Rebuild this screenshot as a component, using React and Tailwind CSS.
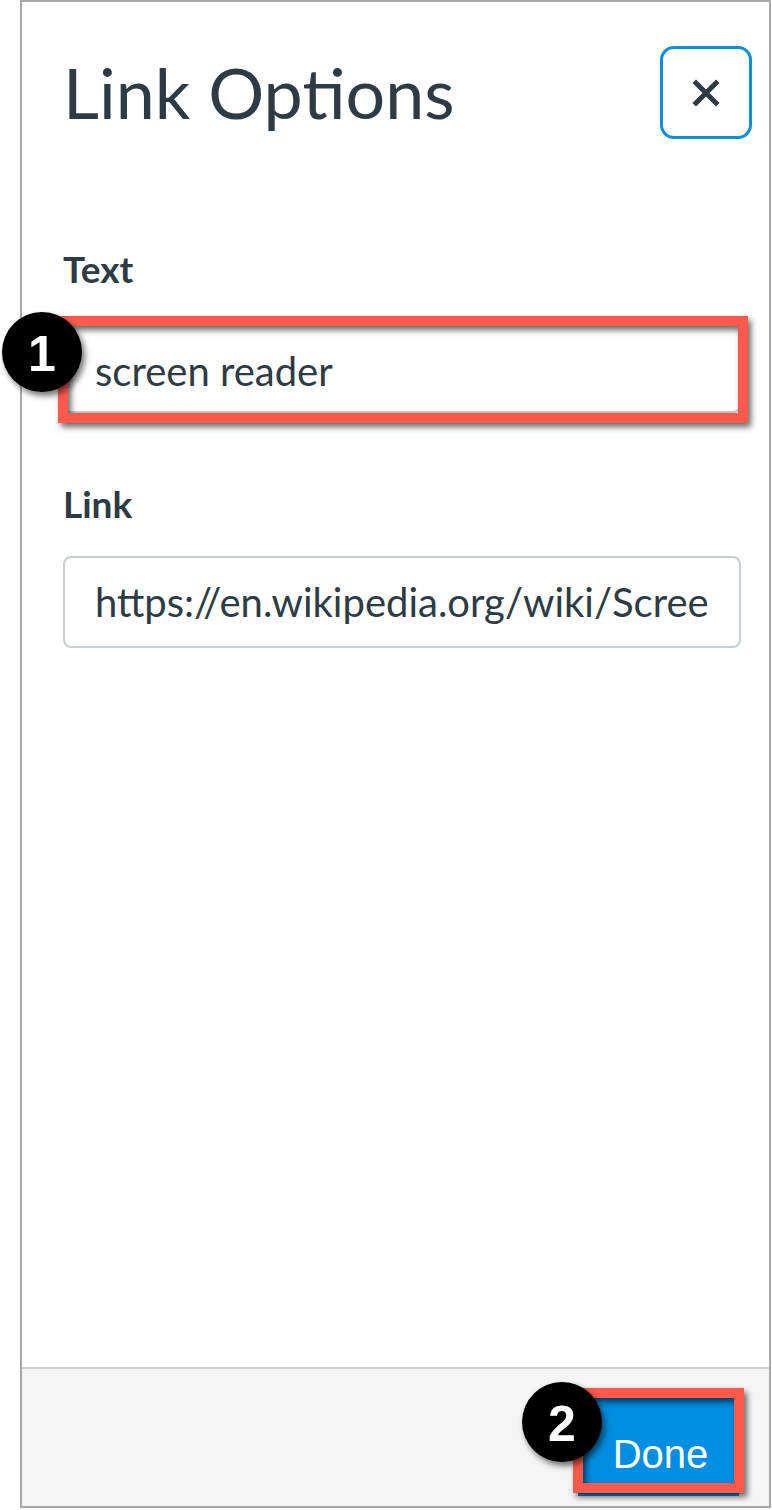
import React from "react";

const INK = "text-[#2d3b45]";

const CloseIcon = () => (
  <svg width="30" height="30" viewBox="0 0 30 30" fill="none">
    <path d="M5 5 L25 25 M25 5 L5 25" stroke="#2d3b45" strokeWidth="5" strokeLinecap="square" />
  </svg>
);

const Badge = ({ n, className }) => (
  <div
    className={`absolute flex h-[80px] w-[80px] items-center justify-center rounded-full bg-black pt-[4px] text-[50px] font-bold leading-none text-white shadow-[3px_4px_6px_rgba(0,0,0,0.55)] ${className}`}
    style={{ fontFamily: '"Liberation Sans", Arial, sans-serif' }}
  >
    {n}
  </div>
);

export default function App() {
  return (
    <div className="relative h-[1510px] w-[772px] bg-white pb-[2px] pl-[20px] pr-[1px]" style={{ fontFamily: "Lato, sans-serif" }}>
      <div className="flex h-full flex-col border-2 border-[#a9a9a9]">
        <div className="flex-1 pl-[41px] pr-[28px]">
          <div className="flex items-start justify-between pt-[44px]">
            <h1 className={`mt-[11px] text-[70px] font-normal leading-none ${INK}`}>Link Options</h1>
            <button className="mr-[-11px] flex h-[93px] w-[92px] items-center justify-center rounded-[14px] border-[3px] border-[#0a8fe0] bg-white">
              <CloseIcon />
            </button>
          </div>

          <div className={`mt-[111px] text-[37px] font-bold leading-none ${INK}`}>Text</div>
          <div className={`mt-[34px] flex h-[92px] items-center rounded-[8px] border-2 border-[#c7cdd1] pl-[30px] pt-[8px] text-[40px] ${INK}`}>
            screen reader
          </div>

          <div className={`mt-[72px] text-[37px] font-bold leading-none ${INK}`}>Link</div>
          <div className={`mt-[34px] flex h-[92px] items-center overflow-hidden whitespace-nowrap rounded-[8px] border-2 border-[#c7cdd1] pl-[30px] text-[40px] ${INK}`}>
            https://en.wikipedia.org/wiki/Scree
          </div>
        </div>

        <div className="flex h-[139px] justify-end border-t-2 border-[#c7cdd1] bg-[#f5f5f5] pr-[30px] pt-[24px]">
          <button
            className="h-[103px] w-[161px] bg-[#008ee2] pl-[4px] pt-[18px] text-center text-[40px] leading-none text-white"
            style={{ fontFamily: '"Liberation Sans", Arial, sans-serif' }}
          >
            Done
          </button>
        </div>
      </div>

      {/* annotations */}
      <div className="absolute left-[58px] top-[316px] h-[107px] w-[690px] border-[10px] border-[#fd5a4c] drop-shadow-[3px_4px_3px_rgba(0,0,0,0.6)]" />
      <div className="absolute left-[573px] top-[1388px] h-[105px] w-[171px] border-[10px] border-[#fd5a4c] drop-shadow-[3px_4px_3px_rgba(0,0,0,0.6)]" />
      <Badge n="1" className="left-[2px] top-[312px]" />
      <Badge n="2" className="left-[522px] top-[1382px]" />
    </div>
  );
}
